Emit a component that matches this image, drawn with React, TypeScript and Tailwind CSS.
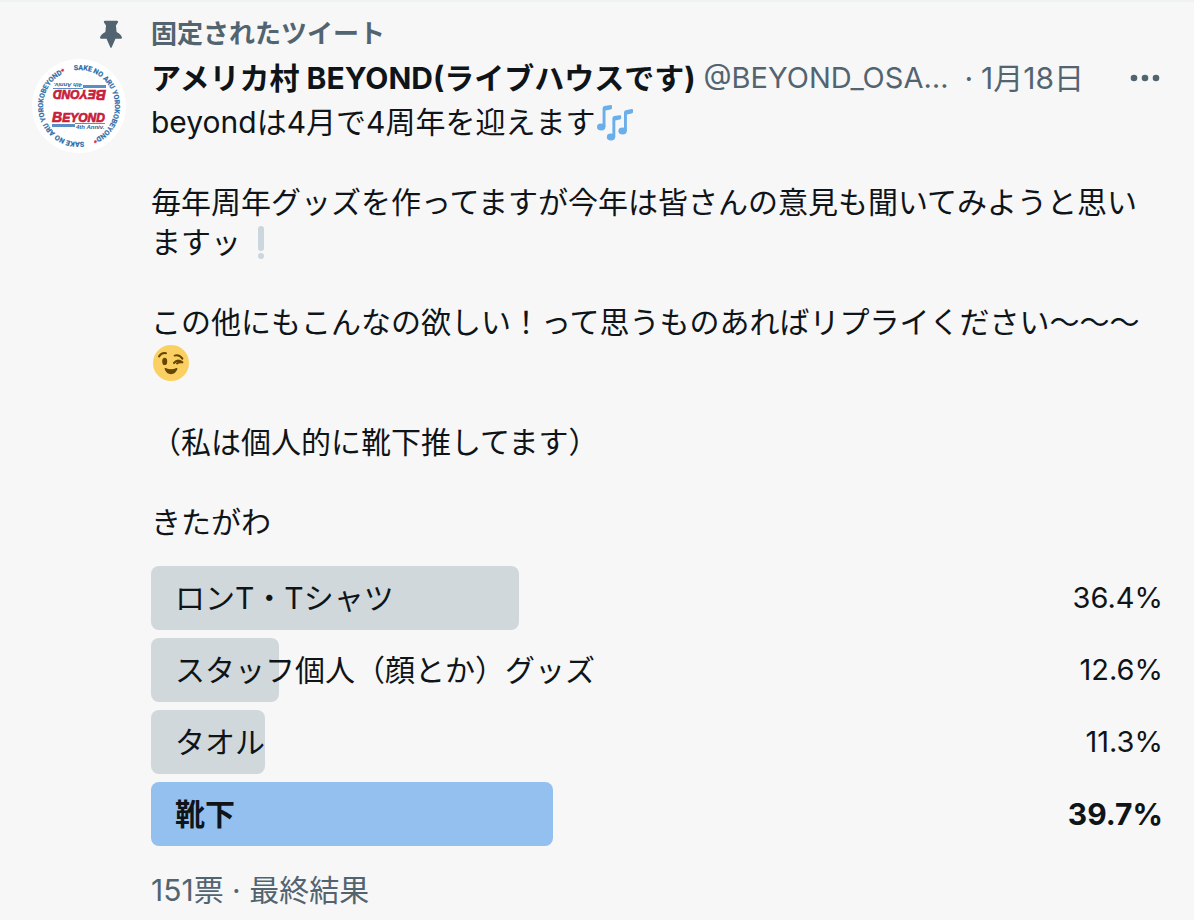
import React from "react";

type Option = { label: string; percent: number; winner?: boolean };

const options: Option[] = [
  { label: "ロンT・Tシャツ", percent: 36.4 },
  { label: "スタッフ個人（顔とか）グッズ", percent: 12.6 },
  { label: "タオル", percent: 11.3 },
  { label: "靴下", percent: 39.7, winner: true },
];

function PinIcon() {
  return (
    <svg viewBox="0 0 24 24" className="size-8 fill-[#536471]" aria-hidden="true">
      <path d="M20.235 14.61c-.375-1.745-2.342-3.506-4.01-4.125l-.544-4.948 1.495-2.242c.157-.236.172-.538.037-.787-.134-.25-.392-.403-.675-.403h-9.14c-.284 0-.542.154-.676.403-.134.25-.12.553.038.788l1.498 2.247-.484 4.943c-1.668.62-3.633 2.38-4.004 4.116-.04.16-.016.404.132.594.103.132.304.29.68.29H8.64l2.904 6.712c.078.184.26.302.458.302s.38-.118.46-.302l2.903-6.713h4.057c.376 0 .576-.156.68-.286.146-.188.172-.434.135-.59z" />
    </svg>
  );
}

function LogoHalf() {
  return (
    <g>
      <text
        fontFamily="Roboto, Liberation Sans, sans-serif"
        fontWeight="700"
        fontSize="7"
        fill="#2f6da8"
        stroke="#2f6da8"
        strokeWidth="0.2"
      >
        <textPath href="#avatar-ring">
          SAKE NO ARU YOROKOBEYOND
          <tspan fill="#d3203a" stroke="#d3203a">
            *
          </tspan>
        </textPath>
      </text>
      <text
        x="21"
        y="64"
        fontFamily="Liberation Sans, sans-serif"
        fontWeight="700"
        fontStyle="italic"
        fill="#c8203c"
        stroke="#c8203c"
        strokeWidth="0.7"
      >
        <tspan fontSize="14">B</tspan>
        <tspan fontSize="12">EYOND</tspan>
      </text>
      <path d="M21 66h23v3h-23z" fill="#5b8fc4" />
      <path d="M44 65h30v1h-30z" fill="#5b8fc4" />
      <text
        x="45"
        y="71"
        fontFamily="Liberation Sans, sans-serif"
        fontWeight="700"
        fontStyle="italic"
        fontSize="6"
        fill="#2c5f96"
      >
        4th Anniv.
      </text>
    </g>
  );
}

function Avatar() {
  return (
    <svg viewBox="0 0 96 96" className="size-24" aria-hidden="true">
      <defs>
        <path id="avatar-ring" d="M43 12.300A36 36 0 0 1 84 48A36 36 0 0 1 43 83.700" />
      </defs>
      <circle cx="48" cy="48" r="47" fill="#fff" />
      <LogoHalf />
      <g transform="rotate(180 48 48)">
        <LogoHalf />
      </g>
    </svg>
  );
}

const emojiClass = "mx-0.5 -mt-2 -mb-1 inline-block size-9 align-middle";

function Notes() {
  return (
    <svg viewBox="0 0 36 36" className={emojiClass} fill="#6aaeea" aria-hidden="true">
      <ellipse cx="4.2" cy="22" rx="4.2" ry="3.4" />
      <path d="M5.600 22V3.400Q5.600 1.500 7.500 1.100L13.600 .1Q15 0 15 1.300V3Q15 4.200 13.600 4.400L8.500 5.400V22z" />
      <ellipse cx="14" cy="32" rx="4.2" ry="3.4" />
      <path d="M15.400 32V13.400Q15.400 11.600 17.200 11.100L22.800 10.200Q24.200 10 24.200 11.400V13Q24.200 14.200 22.800 14.500L18.300 15.400V32z" />
      <ellipse cx="25.6" cy="26" rx="4.2" ry="3.4" />
      <path d="M27 26V7.600Q27 5.800 28.800 5.300L34.600 4.100Q36 3.800 36 5.200V7Q36 8.200 34.700 8.600L29.900 9.600V26z" />
    </svg>
  );
}

function Exclamation() {
  return (
    <svg viewBox="0 0 36 36" className={emojiClass} fill="#ccd6dd" aria-hidden="true">
      <rect x="15" y="1" width="6" height="25" rx="3" />
      <circle cx="18" cy="31" r="3" />
    </svg>
  );
}

function Wink() {
  return (
    <svg viewBox="0 0 36 36" className={emojiClass} aria-hidden="true">
      <circle cx="18" cy="18" r="18" fill="#fbd062" />
      <g fill="none" stroke="#664500" strokeWidth="2" strokeLinecap="round" strokeLinejoin="round">
        <path d="M6 11.500Q8.500 7.200 13 8.200" />
        <path d="M21.600 10.600Q26.500 9.200 29.400 13.600" />
        <path d="M21 18Q24.600 13.600 29.400 17.400Q26 16.600 24 18.400" />
      </g>
      <ellipse cx="11.7" cy="16.4" rx="2.5" ry="3.6" fill="#664500" />
      <path
        d="M12.600 23Q18 25.600 23.400 23Q24.800 22.800 24.300 24.300Q22.400 29.200 18 29.200T11.700 24.300Q11.200 22.800 12.600 23z"
        fill="#664500"
      />
    </svg>
  );
}

function PollRow({ label, percent, winner }: Option) {
  return (
    <li
      className={
        "relative flex h-16 items-center justify-between pl-6 " + (winner ? "font-bold" : "")
      }
    >
      <div
        className={
          "absolute inset-y-0 left-0 rounded-lg " + (winner ? "bg-[#93c0ef]" : "bg-[#d0d8db]")
        }
        style={{ width: `${percent}%` }}
      />
      <span className="relative">{label}</span>
      <span className={"relative " + (winner ? "" : "text-[29px]")}>{percent}%</span>
    </li>
  );
}

export default function App() {
  return (
    <article
      lang="ja"
      className="min-h-screen border-t-2 border-[#eff2f3] bg-[#f7f7f7] pt-4 pr-[31px] pb-2 pl-[31px] font-['Inter','Noto_Sans_CJK_JP',sans-serif] text-[30px] leading-10 text-[#0f1419]"
    >
      <div className="flex items-center gap-6 text-[#536471]">
        <div className="flex w-24 shrink-0 justify-end">
          <PinIcon />
        </div>
        <span className="text-[26px] leading-8 font-bold">固定されたツイート</span>
      </div>
      <div className="mt-2 flex gap-6">
        <div className="shrink-0">
          <Avatar />
        </div>
        <div className="min-w-0 flex-1">
          <header className="flex items-center whitespace-nowrap">
            <h1 className="font-bold">アメリカ村 BEYOND(ライブハウスです)</h1>
            <div className="ml-2 flex text-[#536471]">
              <span className="text-[29px]">@BEYOND_OSA…</span>
              <span className="mr-2 ml-4">·</span>
              <time>1月18日</time>
            </div>
            <button type="button" aria-label="もっと見る" className="ml-auto">
              <svg viewBox="0 0 36 36" className="size-9 fill-[#536471]" aria-hidden="true">
                <circle cx="7" cy="18" r="3.3" />
                <circle cx="18" cy="18" r="3.3" />
                <circle cx="29" cy="18" r="3.3" />
              </svg>
            </button>
          </header>
          <div className="mt-1 flex flex-col gap-10">
            <p>
              beyondは4月で4周年を迎えます
              <Notes />
            </p>
            <p>
              毎年周年グッズを作ってますが今年は皆さんの意見も聞いてみようと思いますッ
              <Exclamation />
            </p>
            <p>
              この他にもこんなの欲しい！って思うものあればリプライください〜〜〜
              <Wink />
            </p>
            <p>（私は個人的に靴下推してます）</p>
            <p>きたがわ</p>
          </div>
          <ul className="mt-6 flex flex-col gap-2">
            {options.map((o) => (
              <PollRow key={o.label} {...o} />
            ))}
          </ul>
          <footer className="mt-6 text-[#536471]">151票 · 最終結果</footer>
        </div>
      </div>
    </article>
  );
}
